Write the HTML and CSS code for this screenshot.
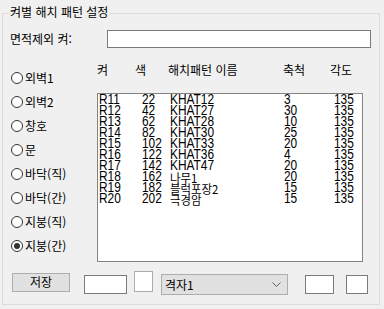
FILE: index.html
```html
<!DOCTYPE html>
<html lang="ko">
<head>
<meta charset="utf-8">
<link rel="stylesheet" href="styles.css">
</head>
<body>
<div class="group">
  <span class="title">켜별 해치 패턴 설정</span>
  <div class="row1">
    <span class="lbl">면적제외 켜:</span>
    <div class="input wide"></div>
  </div>
  <div class="middle">
    <div class="radios">
      <div class="radio"><span class="dot"></span>외벽1</div>
      <div class="radio"><span class="dot"></span>외벽2</div>
      <div class="radio"><span class="dot"></span>창호</div>
      <div class="radio"><span class="dot"></span>문</div>
      <div class="radio"><span class="dot"></span>바닥(직)</div>
      <div class="radio"><span class="dot"></span>바닥(간)</div>
      <div class="radio"><span class="dot"></span>지붕(직)</div>
      <div class="radio"><span class="dot checked"></span>지붕(간)</div>
    </div>
    <div class="listcol">
      <div class="head">
        <span>켜</span><span>색</span><span>해치패턴 이름</span><span>축척</span><span>각도</span>
      </div>
      <div class="listbox">
        <div class="lrow"><span class="c">R11</span><span class="c">22</span><span class="c">KHAT12</span><span class="c">3</span><span class="c">135</span></div>
        <div class="lrow"><span class="c">R12</span><span class="c">42</span><span class="c">KHAT27</span><span class="c">30</span><span class="c">135</span></div>
        <div class="lrow"><span class="c">R13</span><span class="c">62</span><span class="c">KHAT28</span><span class="c">10</span><span class="c">135</span></div>
        <div class="lrow"><span class="c">R14</span><span class="c">82</span><span class="c">KHAT30</span><span class="c">25</span><span class="c">135</span></div>
        <div class="lrow"><span class="c">R15</span><span class="c">102</span><span class="c">KHAT33</span><span class="c">20</span><span class="c">135</span></div>
        <div class="lrow"><span class="c">R16</span><span class="c">122</span><span class="c">KHAT36</span><span class="c">4</span><span class="c">135</span></div>
        <div class="lrow"><span class="c">R17</span><span class="c">142</span><span class="c">KHAT47</span><span class="c">20</span><span class="c">135</span></div>
        <div class="lrow"><span class="c">R18</span><span class="c">162</span><span class="c k">나무1</span><span class="c">20</span><span class="c">135</span></div>
        <div class="lrow"><span class="c">R19</span><span class="c">182</span><span class="c k">블럭포장2</span><span class="c">15</span><span class="c">135</span></div>
        <div class="lrow"><span class="c">R20</span><span class="c">202</span><span class="c k">극경암</span><span class="c">15</span><span class="c">135</span></div>
      </div>
    </div>
  </div>
  <div class="bottom">
    <div class="btn">저장</div>
    <div class="input small"></div>
    <div class="square"></div>
    <div class="combo"><span>격자1</span>
      <svg class="chev" width="9" height="5" viewBox="0 0 9 5"><path d="M0.5 0.5 L4.5 4.5 L8.5 0.5" fill="none" stroke="#606060" stroke-width="1"/></svg>
    </div>
    <div class="input box4"></div>
    <div class="input box5"></div>
  </div>
</div>
</body>
</html>
```

FILE: styles.css
```css
html, body {
  margin: 0;
  padding: 0;
  background: #f0f0f0;
  width: 384px;
  height: 309px;
  overflow: hidden;
  font-family: "Noto Sans CJK KR", "Noto Sans", sans-serif;
  font-size: 12px;
  color: #000;
}

.group {
  position: relative;
  box-sizing: border-box;
  margin: 13px 4px 0 2px;
  height: 292px;
  border: 1px solid #dcdcdc;
}

.title {
  position: absolute;
  top: -10px;
  left: 6px;
  padding: 0 1px;
  line-height: 16px;
  background: #f0f0f0;
}

.row1 {
  display: flex;
  align-items: center;
  padding: 16px 0 0 7px;
  height: 18px;
}

.lbl {
  width: 97px;
  line-height: 18px;
}

.input {
  box-sizing: border-box;
  background: #fff;
  border: 1px solid #7a7a7a;
}

.wide {
  width: 264px;
  height: 18px;
}

.middle {
  display: flex;
}

.radios {
  width: 86px;
  padding: 18px 0 0 8px;
  display: flex;
  flex-direction: column;
}

.radio {
  height: 24px;
  display: flex;
  align-items: center;
  line-height: 16px;
}

.dot {
  box-sizing: border-box;
  width: 12px;
  height: 12px;
  border: 1px solid #333;
  border-radius: 50%;
  background: #fff;
  margin-right: 2px;
  display: flex;
  align-items: center;
  justify-content: center;
}

.dot.checked::after {
  content: "";
  width: 6px;
  height: 6px;
  border-radius: 50%;
  background: #333;
}

.listcol {
  width: 266px;
}

.head {
  margin-top: 12px;
  height: 20px;
  line-height: 20px;
  display: grid;
  grid-template-columns: 38px 33px 115px 47px 1fr;
}

.listbox {
  box-sizing: border-box;
  margin-top: 13px;
  width: 266px;
  height: 169px;
  background: #fff;
  border: 1px solid #828282;
  padding-left: 1px;
  font-family: "Liberation Sans", "Noto Sans CJK KR", sans-serif;
  font-size: 14px;
}

.lrow {
  display: grid;
  grid-template-columns: 43px 28px 114px 50px 1fr;
  height: 11px;
  line-height: 11px;
}

.c {
  display: block;
  height: 11px;
  white-space: nowrap;
  transform: scaleX(0.85);
  transform-origin: 0 0;
}

.c.k {
  font-family: "Noto Sans CJK KR", sans-serif;
  font-size: 12px;
  transform: scaleX(0.95) translateY(1px);
}

.bottom {
  display: flex;
  align-items: flex-start;
  margin-top: 11px;
}

.btn {
  box-sizing: border-box;
  margin-left: 9px;
  width: 58px;
  height: 19px;
  background: #e1e1e1;
  border: 1px solid #adadad;
  text-align: center;
  line-height: 16px;
}

.small {
  margin: 2px 0 0 14px;
  width: 43px;
  height: 19px;
}

.square {
  box-sizing: border-box;
  margin-left: 7px;
  margin-top: -2px;
  width: 19px;
  height: 21px;
  background: #fff;
  border: 1px solid #adadad;
}

.combo {
  box-sizing: border-box;
  margin: 1px 0 0 8px;
  width: 127px;
  height: 21px;
  background: #e1e1e1;
  border: 1px solid #adadad;
  display: flex;
  align-items: center;
  justify-content: space-between;
  padding: 0 6px 0 3px;
  line-height: 18px;
}

.box4 {
  margin: 2px 0 0 17px;
  width: 29px;
  height: 19px;
}

.box5 {
  margin: 2px 0 0 12px;
  width: 22px;
  height: 19px;
}
```
